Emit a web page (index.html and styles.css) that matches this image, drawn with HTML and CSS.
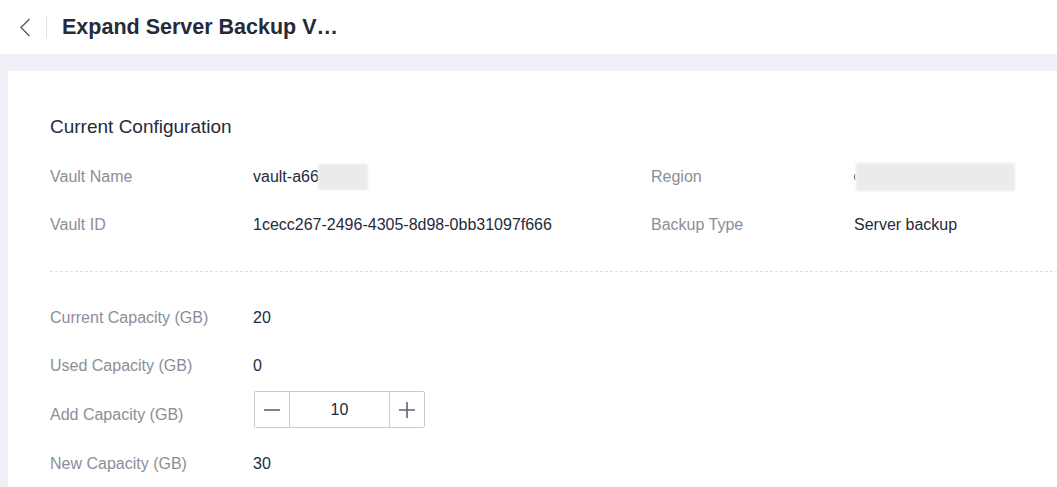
FILE: index.html
```html
<!DOCTYPE html>
<html>
<head>
<meta charset="utf-8">
<link rel="stylesheet" href="styles.css">
</head>
<body>
<header class="topbar">
  <button class="back" aria-label="Back">
    <svg width="12" height="19" viewBox="0 0 12 19"><path d="M10.5 1 L2 9.5 L10.5 18" fill="none" stroke="#5f6470" stroke-width="1.5"/></svg>
  </button>
  <span class="sep"></span>
  <h1 class="title">Expand Server Backup V…</h1>
</header>
<main class="main">
  <section class="card">
    <h2 class="section-title">Current Configuration</h2>
    <div class="grid">
      <div class="label">Vault Name</div>
      <div class="value">vault-a66<span class="mask mask-name"></span></div>
      <div class="label">Region</div>
      <div class="value"><span class="tick"></span><span class="mask mask-region"></span></div>
      <div class="label">Vault ID</div>
      <div class="value">1cecc267-2496-4305-8d98-0bb31097f666</div>
      <div class="label">Backup Type</div>
      <div class="value">Server backup</div>
    </div>
    <div class="divider"></div>
    <div class="list">
      <div class="row"><div class="label">Current Capacity (GB)</div><div class="value">20</div></div>
      <div class="row"><div class="label">Used Capacity (GB)</div><div class="value">0</div></div>
      <div class="row row-input"><div class="label">Add Capacity (GB)</div>
        <div class="stepper">
          <button class="step"><svg width="18" height="18" viewBox="0 0 18 18"><path d="M1 9 H17" stroke="#5f6470" stroke-width="1.6"/></svg></button>
          <span class="num">10</span>
          <button class="step"><svg width="18" height="18" viewBox="0 0 18 18"><path d="M1 9 H17 M9 1 V17" stroke="#5f6470" stroke-width="1.6"/></svg></button>
        </div>
      </div>
      <div class="row"><div class="label">New Capacity (GB)</div><div class="value">30</div></div>
    </div>
  </section>
</main>
</body>
</html>
```
FILE: styles.css
```css
* { box-sizing: border-box; }
html, body { margin: 0; padding: 0; }
body {
  background: #eff0f5;
  font-family: "Liberation Sans", Arial, sans-serif;
  color: #252b3a;
  overflow: hidden;
}
.topbar {
  height: 54px;
  background: #fff;
  display: flex;
  align-items: center;
  padding-left: 19px;
}
.back {
  border: 0;
  background: none;
  padding: 0;
  width: 12px;
  height: 19px;
  display: flex;
  align-items: center;
  justify-content: center;
}
.sep {
  width: 1px;
  height: 22px;
  background: #dfe1e6;
  margin-left: 15px;
  margin-right: 15px;
}
.title {
  margin: 0;
  font-size: 21.5px;
  font-weight: bold;
  color: #252b3a;
  line-height: 24px;
}
.main {
  padding: 17px 0 0 8px;
}
.card {
  background: #fff;
  padding: 44px 0 20px 42px;
  min-height: 430px;
}
.section-title {
  margin: 0 0 14px;
  font-size: 19px;
  font-weight: normal;
  line-height: 24px;
  color: #252b3a;
}
.grid {
  display: grid;
  grid-template-columns: 203px 398px 203px 1fr;
  grid-auto-rows: 48px;
  align-items: center;
}
.label {
  font-size: 16px;
  color: #8a8e99;
}
.value {
  font-size: 16px;
  color: #252b3a;
  display: flex;
  align-items: center;
}
.mask {
  display: inline-block;
  background: #ebebeb;
  filter: blur(1px);
}
.tick {
  width: 2px;
  height: 6px;
  border-left: 1.5px solid #555;
  border-radius: 2px 0 0 2px;
}
.mask-name { width: 50px; height: 26px; margin-left: -1px; }
.mask-region { width: 159px; height: 28px; }
.divider {
  height: 1px;
  background: repeating-linear-gradient(to right, #dfe1e6 0 3px, transparent 3px 5px);
  margin: 22px 0 22px;
}
.row {
  display: grid;
  grid-template-columns: 203px 1fr;
  height: 48px;
  align-items: center;
}
.row-input { height: 50px; }
.stepper {
  display: flex;
  width: 171px;
  height: 37px;
  border: 1px solid #c9cbd1;
  border-radius: 2px;
  margin-left: 1px;
  margin-bottom: 11px;
}
.step {
  width: 35px;
  border: 0;
  background: #fff;
  padding: 0;
  display: flex;
  align-items: center;
  justify-content: center;
}
.step:first-child { border-right: 1px solid #c9cbd1; }
.step:last-child { border-left: 1px solid #c9cbd1; }
.num {
  flex: 1;
  display: flex;
  align-items: center;
  justify-content: center;
  font-size: 16px;
  color: #252b3a;
}
```
